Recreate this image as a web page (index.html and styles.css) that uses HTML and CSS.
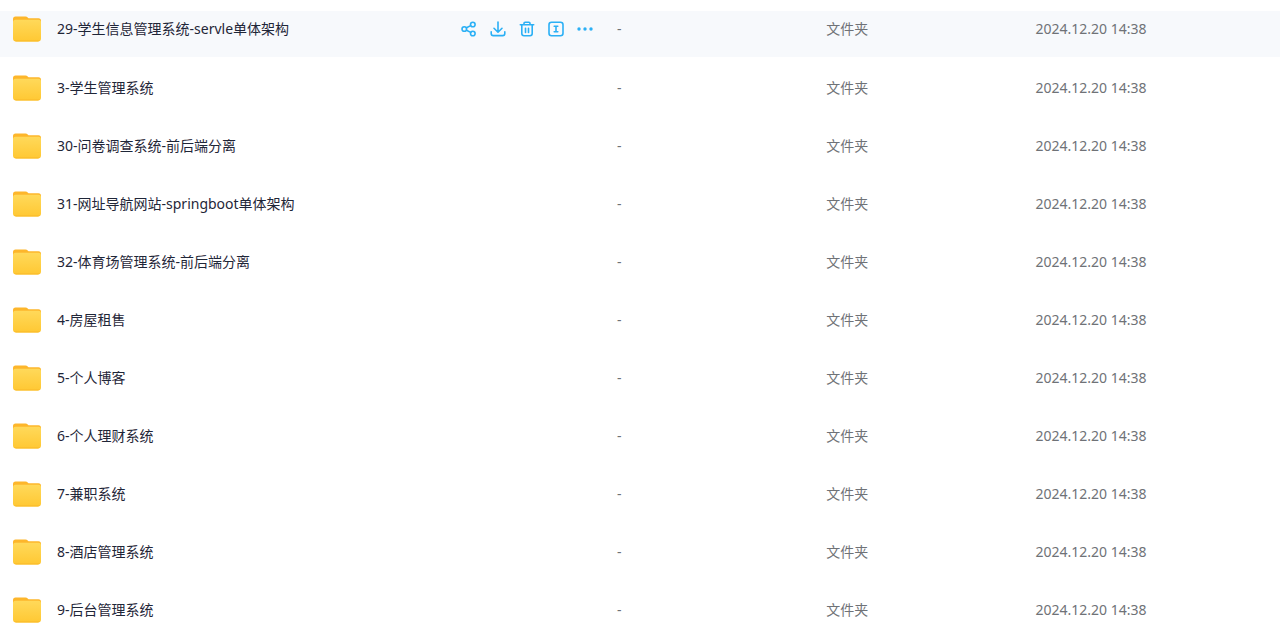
FILE: index.html
```html
<!DOCTYPE html>
<html lang="zh-CN">
<head>
  <meta charset="utf-8">
  <title>文件列表</title>
  <link rel="stylesheet" href="styles.css">
</head>
<body>
  <!-- shared folder icon -->
  <svg class="defs" width="0" height="0" aria-hidden="true">
    <defs>
      <linearGradient id="folderFront" x1="0" y1="0" x2="0" y2="1">
        <stop offset="0" stop-color="#ffd95a"/>
        <stop offset="1" stop-color="#ffc833"/>
      </linearGradient>
      <symbol id="folder" viewBox="0 0 28 26">
        <path d="M0 3a2.500 2.500 0 0 1 2.500-2.500h10c1 0 1.600.3 2.200.9l.8.8h10A2.500 2.500 0 0 1 28 4.700V12H0z" fill="#fdb62b"/>
        <path d="M0 6.300a2.500 2.500 0 0 1 2.500-2.500h9.800c.8 0 1.300-.1 1.900-.1h11.300A2.500 2.500 0 0 1 28 6.200V22.500a3 3 0 0 1-3 3H3a3 3 0 0 1-3-3z" fill="url(#folderFront)"/>
        <path d="M1 24.300c.5.700 1.200 1.200 2 1.200h22c.8 0 1.500-.5 2-1.200z" fill="#fbbd2c"/>
      </symbol>
    </defs>
  </svg>

  <table class="file-list">
    <colgroup>
      <col class="col-name">
      <col class="col-size">
      <col class="col-type">
      <col class="col-date">
    </colgroup>
    <tbody>
      <tr class="active">
        <td>
          <div class="name-cell">
            <svg class="folder"><use href="#folder"/></svg>
            <a class="name" href="#">29-学生信息管理系统-servle单体架构</a>
            <div class="actions">
              <button type="button" aria-label="分享">
                <svg viewBox="0 0 16 16"><circle cx="3.300" cy="8" r="2.300"/><circle cx="11.800" cy="3.500" r="2.300"/><circle cx="11.800" cy="12.500" r="2.300"/><path d="M5.500 6.800l4.200-2.200M5.500 9.200l4.200 2.200"/></svg>
              </button>
              <button type="button" aria-label="下载">
                <svg viewBox="0 0 16 16"><path d="M8 1v10M4 7.300L8 11.200l4-3.900M1.200 10.800v1.700c0 1.300.8 2.100 2.100 2.100h9.400c1.300 0 2.100-.8 2.100-2.100v-1.700"/></svg>
              </button>
              <button type="button" aria-label="删除">
                <svg viewBox="0 0 16 16"><path d="M1.300 3.800h13.400M5 3.600V2.300c0-.7.400-1.100 1.100-1.100h3.800c.7 0 1.100.4 1.100 1.100v1.300M2.800 4v8.600c0 1.400.8 2.200 2.200 2.200h6c1.400 0 2.200-.8 2.200-2.200V4M6.500 7.200v4.200M9.500 7.200v4.200"/></svg>
              </button>
              <button type="button" aria-label="重命名">
                <svg viewBox="0 0 16 16"><rect x="1" y="1.200" width="14" height="13.600" rx="2.500"/><path d="M6.200 5.200h3.600M6.200 10.800h3.600M8 5.200v5.600"/></svg>
              </button>
              <button type="button" aria-label="更多">
                <svg viewBox="0 0 16 16" class="dots"><circle cx="2" cy="8" r="1.700"/><circle cx="8" cy="8" r="1.700"/><circle cx="14" cy="8" r="1.700"/></svg>
              </button>
            </div>
          </div>
        </td>
        <td>-</td>
        <td>文件夹</td>
        <td>2024.12.20 14:38</td>
      </tr>
      <tr>
        <td><div class="name-cell"><svg class="folder"><use href="#folder"/></svg><a class="name" href="#">3-学生管理系统</a></div></td>
        <td>-</td>
        <td>文件夹</td>
        <td>2024.12.20 14:38</td>
      </tr>
      <tr>
        <td><div class="name-cell"><svg class="folder"><use href="#folder"/></svg><a class="name" href="#">30-问卷调查系统-前后端分离</a></div></td>
        <td>-</td>
        <td>文件夹</td>
        <td>2024.12.20 14:38</td>
      </tr>
      <tr>
        <td><div class="name-cell"><svg class="folder"><use href="#folder"/></svg><a class="name" href="#">31-网址导航网站-springboot单体架构</a></div></td>
        <td>-</td>
        <td>文件夹</td>
        <td>2024.12.20 14:38</td>
      </tr>
      <tr>
        <td><div class="name-cell"><svg class="folder"><use href="#folder"/></svg><a class="name" href="#">32-体育场管理系统-前后端分离</a></div></td>
        <td>-</td>
        <td>文件夹</td>
        <td>2024.12.20 14:38</td>
      </tr>
      <tr>
        <td><div class="name-cell"><svg class="folder"><use href="#folder"/></svg><a class="name" href="#">4-房屋租售</a></div></td>
        <td>-</td>
        <td>文件夹</td>
        <td>2024.12.20 14:38</td>
      </tr>
      <tr>
        <td><div class="name-cell"><svg class="folder"><use href="#folder"/></svg><a class="name" href="#">5-个人博客</a></div></td>
        <td>-</td>
        <td>文件夹</td>
        <td>2024.12.20 14:38</td>
      </tr>
      <tr>
        <td><div class="name-cell"><svg class="folder"><use href="#folder"/></svg><a class="name" href="#">6-个人理财系统</a></div></td>
        <td>-</td>
        <td>文件夹</td>
        <td>2024.12.20 14:38</td>
      </tr>
      <tr>
        <td><div class="name-cell"><svg class="folder"><use href="#folder"/></svg><a class="name" href="#">7-兼职系统</a></div></td>
        <td>-</td>
        <td>文件夹</td>
        <td>2024.12.20 14:38</td>
      </tr>
      <tr>
        <td><div class="name-cell"><svg class="folder"><use href="#folder"/></svg><a class="name" href="#">8-酒店管理系统</a></div></td>
        <td>-</td>
        <td>文件夹</td>
        <td>2024.12.20 14:38</td>
      </tr>
      <tr>
        <td><div class="name-cell"><svg class="folder"><use href="#folder"/></svg><a class="name" href="#">9-后台管理系统</a></div></td>
        <td>-</td>
        <td>文件夹</td>
        <td>2024.12.20 14:38</td>
      </tr>
    </tbody>
  </table>
</body>
</html>
```
FILE: styles.css
```css
* {
  box-sizing: border-box;
}
body {
  margin: 0;
  padding-top: 11px;
  background: #fff;
  color: #6f7277;
  font-family: "Noto Sans", "Noto Sans CJK SC", sans-serif;
  font-size: 14px;
  line-height: 20px;
}
.defs {
  position: absolute;
}
.file-list {
  width: 100%;
  table-layout: fixed;
  border-collapse: collapse;
}
.col-name {
  width: 48.2%;
}
.col-size,
.col-type {
  width: 16.35%;
}
td {
  height: 58px;
  padding: 4px 0 0;
  vertical-align: middle;
}
.active td {
  height: 46px;
  padding: 0 0 10px;
  background: #f7f9fc;
}
.name-cell {
  display: flex;
  align-items: center;
  padding: 0 24px 0 13px;
}
.folder {
  width: 28px;
  height: 26px;
  margin-right: 16px;
  flex-shrink: 0;
}
.name {
  color: #1f2638;
  text-decoration: none;
}
.name:hover {
  color: #06a7ff;
}
.actions {
  display: flex;
  gap: 13px;
  margin-left: auto;
}
.actions button {
  width: 16px;
  height: 16px;
  padding: 0;
  border: 0;
  background: none;
  cursor: pointer;
}
.actions svg {
  display: block;
  width: 16px;
  height: 16px;
  fill: none;
  stroke: #2bb0f5;
  stroke-width: 1.6;
  stroke-linecap: round;
  stroke-linejoin: round;
}
.actions .dots {
  fill: #2bb0f5;
  stroke: none;
}
```
